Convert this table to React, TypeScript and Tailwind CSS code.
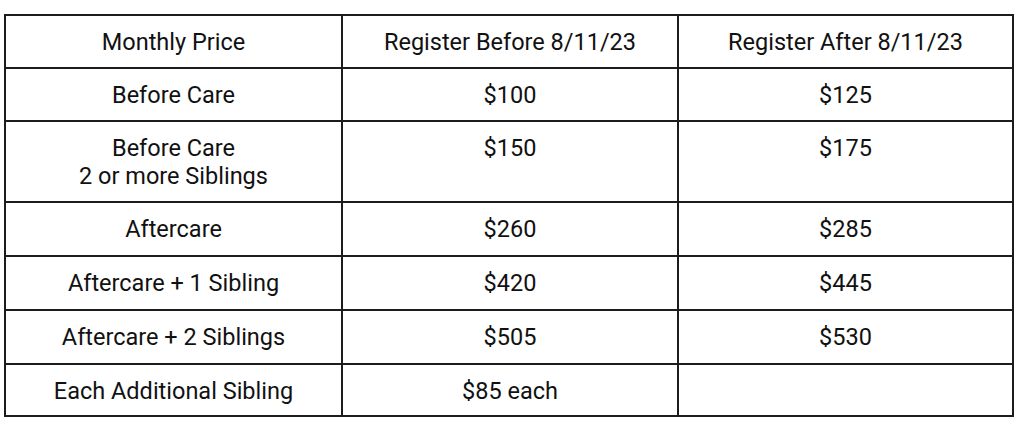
const rows: [string[], string, string][] = [
  [["Before Care"], "$100", "$125"],
  [["Before Care", "2 or more Siblings"], "$150", "$175"],
  [["Aftercare"], "$260", "$285"],
  [["Aftercare + 1 Sibling"], "$420", "$445"],
  [["Aftercare + 2 Siblings"], "$505", "$530"],
  [["Each Additional Sibling"], "$85 each", ""],
];

const cell =
  "border-2 border-[#1c1c1c] text-center align-top pt-[12px] px-2 font-normal";

// row bottoms in the reference aren't perfectly even
const padBottom = ["pb-[11px]", "pb-[11px]", "pb-[12px]", "pb-[12px]", "pb-[12px]", "pb-[10px]"];

export default function App() {
  return (
    <div className="w-[1024px] h-[431px] bg-white pt-[14px] pl-[4px] font-['Roboto',sans-serif] text-[23.5px] leading-[28px] text-[#111]">
      <table className="w-[1010px] border-collapse table-fixed">
        <thead>
          <tr>
            <th className={cell + " pb-[11px] w-[337px]"}>Monthly Price</th>
            <th className={cell + " pb-[11px] w-[336px]"}>Register Before 8/11/23</th>
            <th className={cell + " pb-[11px]"}>Register After 8/11/23</th>
          </tr>
        </thead>
        <tbody>
          {rows.map(([label, before, after], i) => (
            <tr key={i}>
              <td className={cell + " " + padBottom[i]}>
                {label.map((l) => (
                  <div key={l}>{l}</div>
                ))}
              </td>
              <td className={cell + " " + padBottom[i]}>{before}</td>
              <td className={cell + " " + padBottom[i]}>{after}</td>
            </tr>
          ))}
        </tbody>
      </table>
    </div>
  );
}
